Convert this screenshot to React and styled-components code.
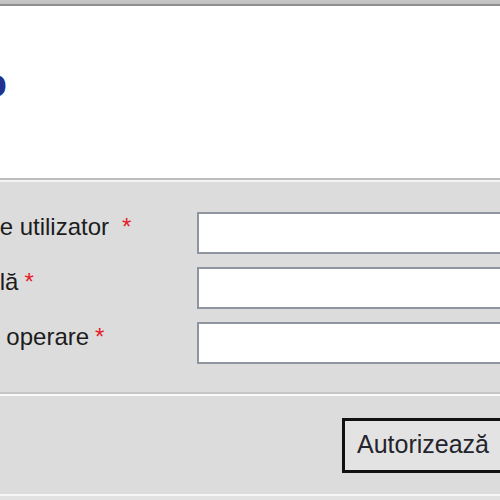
import styled, { createGlobalStyle } from "styled-components";

const GlobalStyle = createGlobalStyle`
  html, body {
    margin: 0;
    padding: 0;
    background: #e2e2e2;
  }
  body {
    font-family: "Liberation Sans", Arial, sans-serif;
  }
`;

const Page = styled.div`
  width: 500px;
  height: 500px;
  overflow: hidden;
  background: #e2e2e2;
`;

const TopBar = styled.div`
  height: 6px;
  background: linear-gradient(#c6c6c6 0, #c0c0c0 4px, #8e8e8e 4px, #8e8e8e 6px);
`;

const Header = styled.div`
  box-sizing: border-box;
  height: 174px;
  background: #fff;
  padding-top: 57px;
  border-bottom: 2px solid #bdbdbd;
`;

const TitleBox = styled.div`
  display: flex;
  justify-content: flex-end;
  width: 300px;
  margin-left: -293px;
`;

const Title = styled.h1`
  margin: 0;
  flex-shrink: 0;
  white-space: nowrap;
  font-size: 40px;
  line-height: 1;
  font-weight: bold;
  color: #22308e;
`;

const Form = styled.div`
  box-sizing: border-box;
  height: 214px;
  background: #dcdcdc;
  border-top: 2px solid #f3f3f3;
  border-bottom: 2px solid #c6c6c6;
  padding-top: 30px;
  margin-left: -51px;
  display: grid;
  grid-template-columns: 248px 1fr;
  row-gap: 13px;
  align-content: start;
`;

const Label = styled.label`
  padding-top: 1px;
  font-size: 24px;
  line-height: 28px;
  color: #1c1c1c;
  white-space: nowrap;
`;

const Star = styled.span`
  color: #e8202a;
  margin-left: ${(p) => (p.$spaced ? "13px" : "6px")};
`;

const Input = styled.input`
  box-sizing: border-box;
  height: 42px;
  width: 340px;
  margin: 0;
  background: #fff;
  border: 2px solid #8f959e;
  border-right: none;
  outline: none;
`;

const Footer = styled.div`
  box-sizing: border-box;
  height: 102px;
  background: #dcdcdc;
  border-top: 2px solid #fafafa;
  border-bottom: 2px solid #f6f6f6;
  padding: 22px 0 0 342px;
`;

const Button = styled.button`
  box-sizing: border-box;
  height: 55px;
  width: 200px;
  padding: 0 0 2px 12px;
  text-align: left;
  background: #e3e3e3;
  border: 3px solid #111;
  border-right: none;
  font-family: "Liberation Sans", Arial, sans-serif;
  font-size: 25px;
  color: #24242c;
  white-space: nowrap;
`;

const fields = [
  { label: "Nume utilizator", spaced: true, type: "text" },
  { label: "Parolă", type: "password" },
  { label: "Data operare", type: "text" },
];

export default function App() {
  return (
    <Page>
      <GlobalStyle />
      <TopBar />
      <Header>
        <TitleBox>
          <Title>Autentificare SIA Sanitaro</Title>
        </TitleBox>
      </Header>
      <Form>
        {fields.map((f) => [
          <Label key={f.label + "-l"}>
            {f.label}
            <Star $spaced={f.spaced}>*</Star>
          </Label>,
          <Input key={f.label + "-i"} type={f.type} />,
        ])}
      </Form>
      <Footer>
        <Button>Autorizează</Button>
      </Footer>
    </Page>
  );
}
